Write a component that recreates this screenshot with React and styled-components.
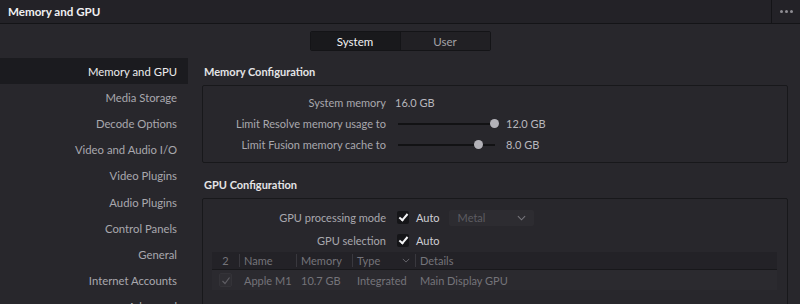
import React from "react";
import styled, { createGlobalStyle } from "styled-components";

const GlobalStyle = createGlobalStyle`
  html, body {
    margin: 0;
    padding: 0;
    background: #28272c;
  }
  body {
    font-family: Lato, "Open Sans", sans-serif;
    font-size: 11px;
    color: #a9a8ae;
    width: 800px;
    height: 304px;
    overflow: hidden;
  }
`;

const sidebarItems = [
  "Memory and GPU",
  "Media Storage",
  "Decode Options",
  "Video and Audio I/O",
  "Video Plugins",
  "Audio Plugins",
  "Control Panels",
  "General",
  "Internet Accounts",
  "Advanced",
];

export default function App() {
  return (
    <>
      <GlobalStyle />
      <TitleBar>
        <Title>Memory and GPU</Title>
        <MoreButton>
          <Dot />
          <Dot />
          <Dot />
        </MoreButton>
      </TitleBar>
      <TabRow>
        <Tabs>
          <Tab active>System</Tab>
          <Tab>User</Tab>
        </Tabs>
      </TabRow>
      <Body>
        <Sidebar>
          {sidebarItems.map((item, i) => (
            <SideItem key={item} active={i === 0}>
              {item}
            </SideItem>
          ))}
        </Sidebar>
        <Main>
          <SectionTitle>Memory Configuration</SectionTitle>
          <Panel>
            <Row>
              <Label>System memory</Label>
              <Value>16.0 GB</Value>
            </Row>
            <Row>
              <Label>Limit Resolve memory usage to</Label>
              <Slider>
                <Thumb style={{ left: "96px" }} />
              </Slider>
              <SliderValue>12.0 GB</SliderValue>
            </Row>
            <Row>
              <Label>Limit Fusion memory cache to</Label>
              <Slider>
                <Thumb style={{ left: "80px" }} />
              </Slider>
              <SliderValue>8.0 GB</SliderValue>
            </Row>
          </Panel>
          <SectionTitle gap>GPU Configuration</SectionTitle>
          <Panel gpu>
            <Row tall>
              <Label>GPU processing mode</Label>
              <Check />
              <CheckLabel>Auto</CheckLabel>
              <Select>
                Metal
                <Chevron viewBox="0 0 10 6">
                  <path d="M1 1 L5 5 L9 1" fill="none" stroke="currentColor" strokeWidth="1.2" />
                </Chevron>
              </Select>
            </Row>
            <Row tall>
              <Label>GPU selection</Label>
              <Check />
              <CheckLabel>Auto</CheckLabel>
            </Row>
            <Table>
              <HeadRow>
                <HeadCell center>2</HeadCell>
                <HeadCell>Name</HeadCell>
                <HeadCell>Memory</HeadCell>
                <HeadCell>
                  Type
                  <Chevron viewBox="0 0 10 6" small>
                    <path d="M1 1 L5 5 L9 1" fill="none" stroke="currentColor" strokeWidth="1" />
                  </Chevron>
                </HeadCell>
                <HeadCell>Details</HeadCell>
              </HeadRow>
              <DataRow>
                <Cell center>
                  <RowCheck>
                    <svg width="10" height="9" viewBox="0 0 10 9">
                      <path d="M1.5 5 L4 7.5 L8.5 1.5" fill="none" stroke="#5f5e64" strokeWidth="1.2" />
                    </svg>
                  </RowCheck>
                </Cell>
                <Cell>Apple M1</Cell>
                <Cell>10.7 GB</Cell>
                <Cell>Integrated</Cell>
                <Cell>Main Display GPU</Cell>
              </DataRow>
            </Table>
          </Panel>
        </Main>
      </Body>
    </>
  );
}

const TitleBar = styled.div`
  height: 23px;
  display: flex;
  align-items: center;
  background: #232227;
  border-bottom: 1px solid #141417;
`;
const Title = styled.div`
  flex: 1;
  padding-left: 8px;
  font-size: 11.6px;
  font-weight: 700;
  color: #f0f0f2;
`;
const MoreButton = styled.div`
  width: 28px;
  height: 100%;
  border-left: 1px solid #141417;
  display: flex;
  align-items: center;
  justify-content: center;
  gap: 2px;
`;
const Dot = styled.span`
  width: 3px;
  height: 3px;
  border-radius: 50%;
  background: #8e8d93;
`;

const TabRow = styled.div`
  display: flex;
  justify-content: center;
  padding-top: 7px;
`;
const Tabs = styled.div`
  display: flex;
  border: 1px solid #141417;
  border-radius: 2px;
  overflow: hidden;
`;
const Tab = styled.div`
  width: 89px;
  height: 18px;
  display: flex;
  align-items: center;
  justify-content: center;
  font-size: 11.5px;
  background: ${(p) => (p.active ? "#19191c" : "#212024")};
  color: ${(p) => (p.active ? "#f2f2f4" : "#a3a2a8")};
  & + & {
    border-left: 1px solid #141417;
  }
`;

const Body = styled.div`
  display: grid;
  grid-template-columns: 188px 1fr;
  column-gap: 14px;
  padding: 7px 12px 0 0;
`;
const Sidebar = styled.div`
  display: flex;
  flex-direction: column;
`;
const SideItem = styled.div`
  height: 26.2px;
  display: flex;
  align-items: center;
  justify-content: flex-end;
  padding-right: 11px;
  font-size: 11.3px;
  background: ${(p) => (p.active ? "#1b1b1f" : "transparent")};
  color: ${(p) => (p.active ? "#ececee" : "#a9a8ae")};
`;

const Main = styled.div`
  display: flex;
  flex-direction: column;
`;
const SectionTitle = styled.div`
  height: ${(p) => (p.gap ? "35px" : "27px")};
  display: flex;
  align-items: ${(p) => (p.gap ? "flex-end" : "center")};
  padding-bottom: ${(p) => (p.gap ? "7px" : "0")};
  box-sizing: border-box;
  padding-left: 2px;
  font-weight: 700;
  color: #e4e4e6;
`;
const Panel = styled.div`
  border: 1px solid #18181b;
  border-radius: 2px;
  padding: ${(p) => (p.gpu ? "7px 10px 20px 9px" : "6px 0 7px")};
  display: flex;
  flex-direction: column;
`;
const Row = styled.div`
  height: ${(p) => (p.tall ? "23px" : "21px")};
  display: flex;
  align-items: center;
  margin-left: ${(p) => (p.tall ? "-9px" : "0")};
`;
const Label = styled.div`
  width: 183px;
  text-align: right;
  margin-right: 9px;
  color: #a9a8ae;
`;
const Value = styled.div`
  color: #b8b7bd;
`;
const Slider = styled.div`
  position: relative;
  width: 97px;
  height: 2px;
  margin-left: 3px;
  background: #121214;
`;
const Thumb = styled.span`
  position: absolute;
  top: -4px;
  width: 9px;
  height: 9px;
  margin-left: -4px;
  border-radius: 50%;
  background: #b3b2b8;
`;
const SliderValue = styled.div`
  margin-left: 11px;
  color: #b8b7bd;
`;
const Check = styled.span`
  width: 12px;
  height: 13px;
  margin-left: 2px;
  border-radius: 2px;
  background: #151518;
  position: relative;
  &::after {
    content: "";
    position: absolute;
    left: 4px;
    top: 1px;
    width: 3px;
    height: 7px;
    border: solid #f4f4f6;
    border-width: 0 2px 2px 0;
    transform: rotate(40deg);
  }
`;
const CheckLabel = styled.span`
  margin-left: 7px;
  color: #cfced3;
`;
const Select = styled.div`
  margin-left: 9px;
  width: 85px;
  height: 16px;
  box-sizing: border-box;
  padding: 0 8px 0 9px;
  display: flex;
  align-items: center;
  justify-content: space-between;
  background: #2d2c31;
  border-radius: 2px;
  color: #5d5c62;
`;
const Chevron = styled.svg`
  width: ${(p) => (p.small ? "8px" : "9px")};
  height: ${(p) => (p.small ? "5px" : "6px")};
  color: #77767c;
  margin-left: ${(p) => (p.small ? "auto" : "0")};
`;

const Table = styled.div`
  margin-top: 0;
  display: flex;
  flex-direction: column;
  color: #75747a;
`;
const columns = "27px 57px 56px 63px 1fr";
const HeadRow = styled.div`
  display: grid;
  grid-template-columns: ${columns};
  height: 17px;
  background: #232227;
  border-bottom: 1px solid #18181b;
`;
const HeadCell = styled.div`
  display: flex;
  align-items: center;
  justify-content: ${(p) => (p.center ? "center" : "flex-start")};
  padding: 0 ${(p) => (p.center ? "0" : "5px")} 0 ${(p) => (p.center ? "0" : "4px")};
  & + & {
    border-left: 1px solid #39383e;
  }
  height: 13px;
  align-self: center;
`;
const DataRow = styled.div`
  display: grid;
  grid-template-columns: ${columns};
  height: 20px;
  background: #2b2a2f;
`;
const Cell = styled.div`
  display: flex;
  align-items: center;
  justify-content: ${(p) => (p.center ? "center" : "flex-start")};
  padding-left: ${(p) => (p.center ? "0" : "5px")};
`;
const RowCheck = styled.span`
  width: 13px;
  height: 14px;
  display: flex;
  align-items: center;
  justify-content: center;
  background: #2f2e33;
  border: 1px solid #343338;
  border-radius: 2px;
  box-sizing: border-box;
`;
